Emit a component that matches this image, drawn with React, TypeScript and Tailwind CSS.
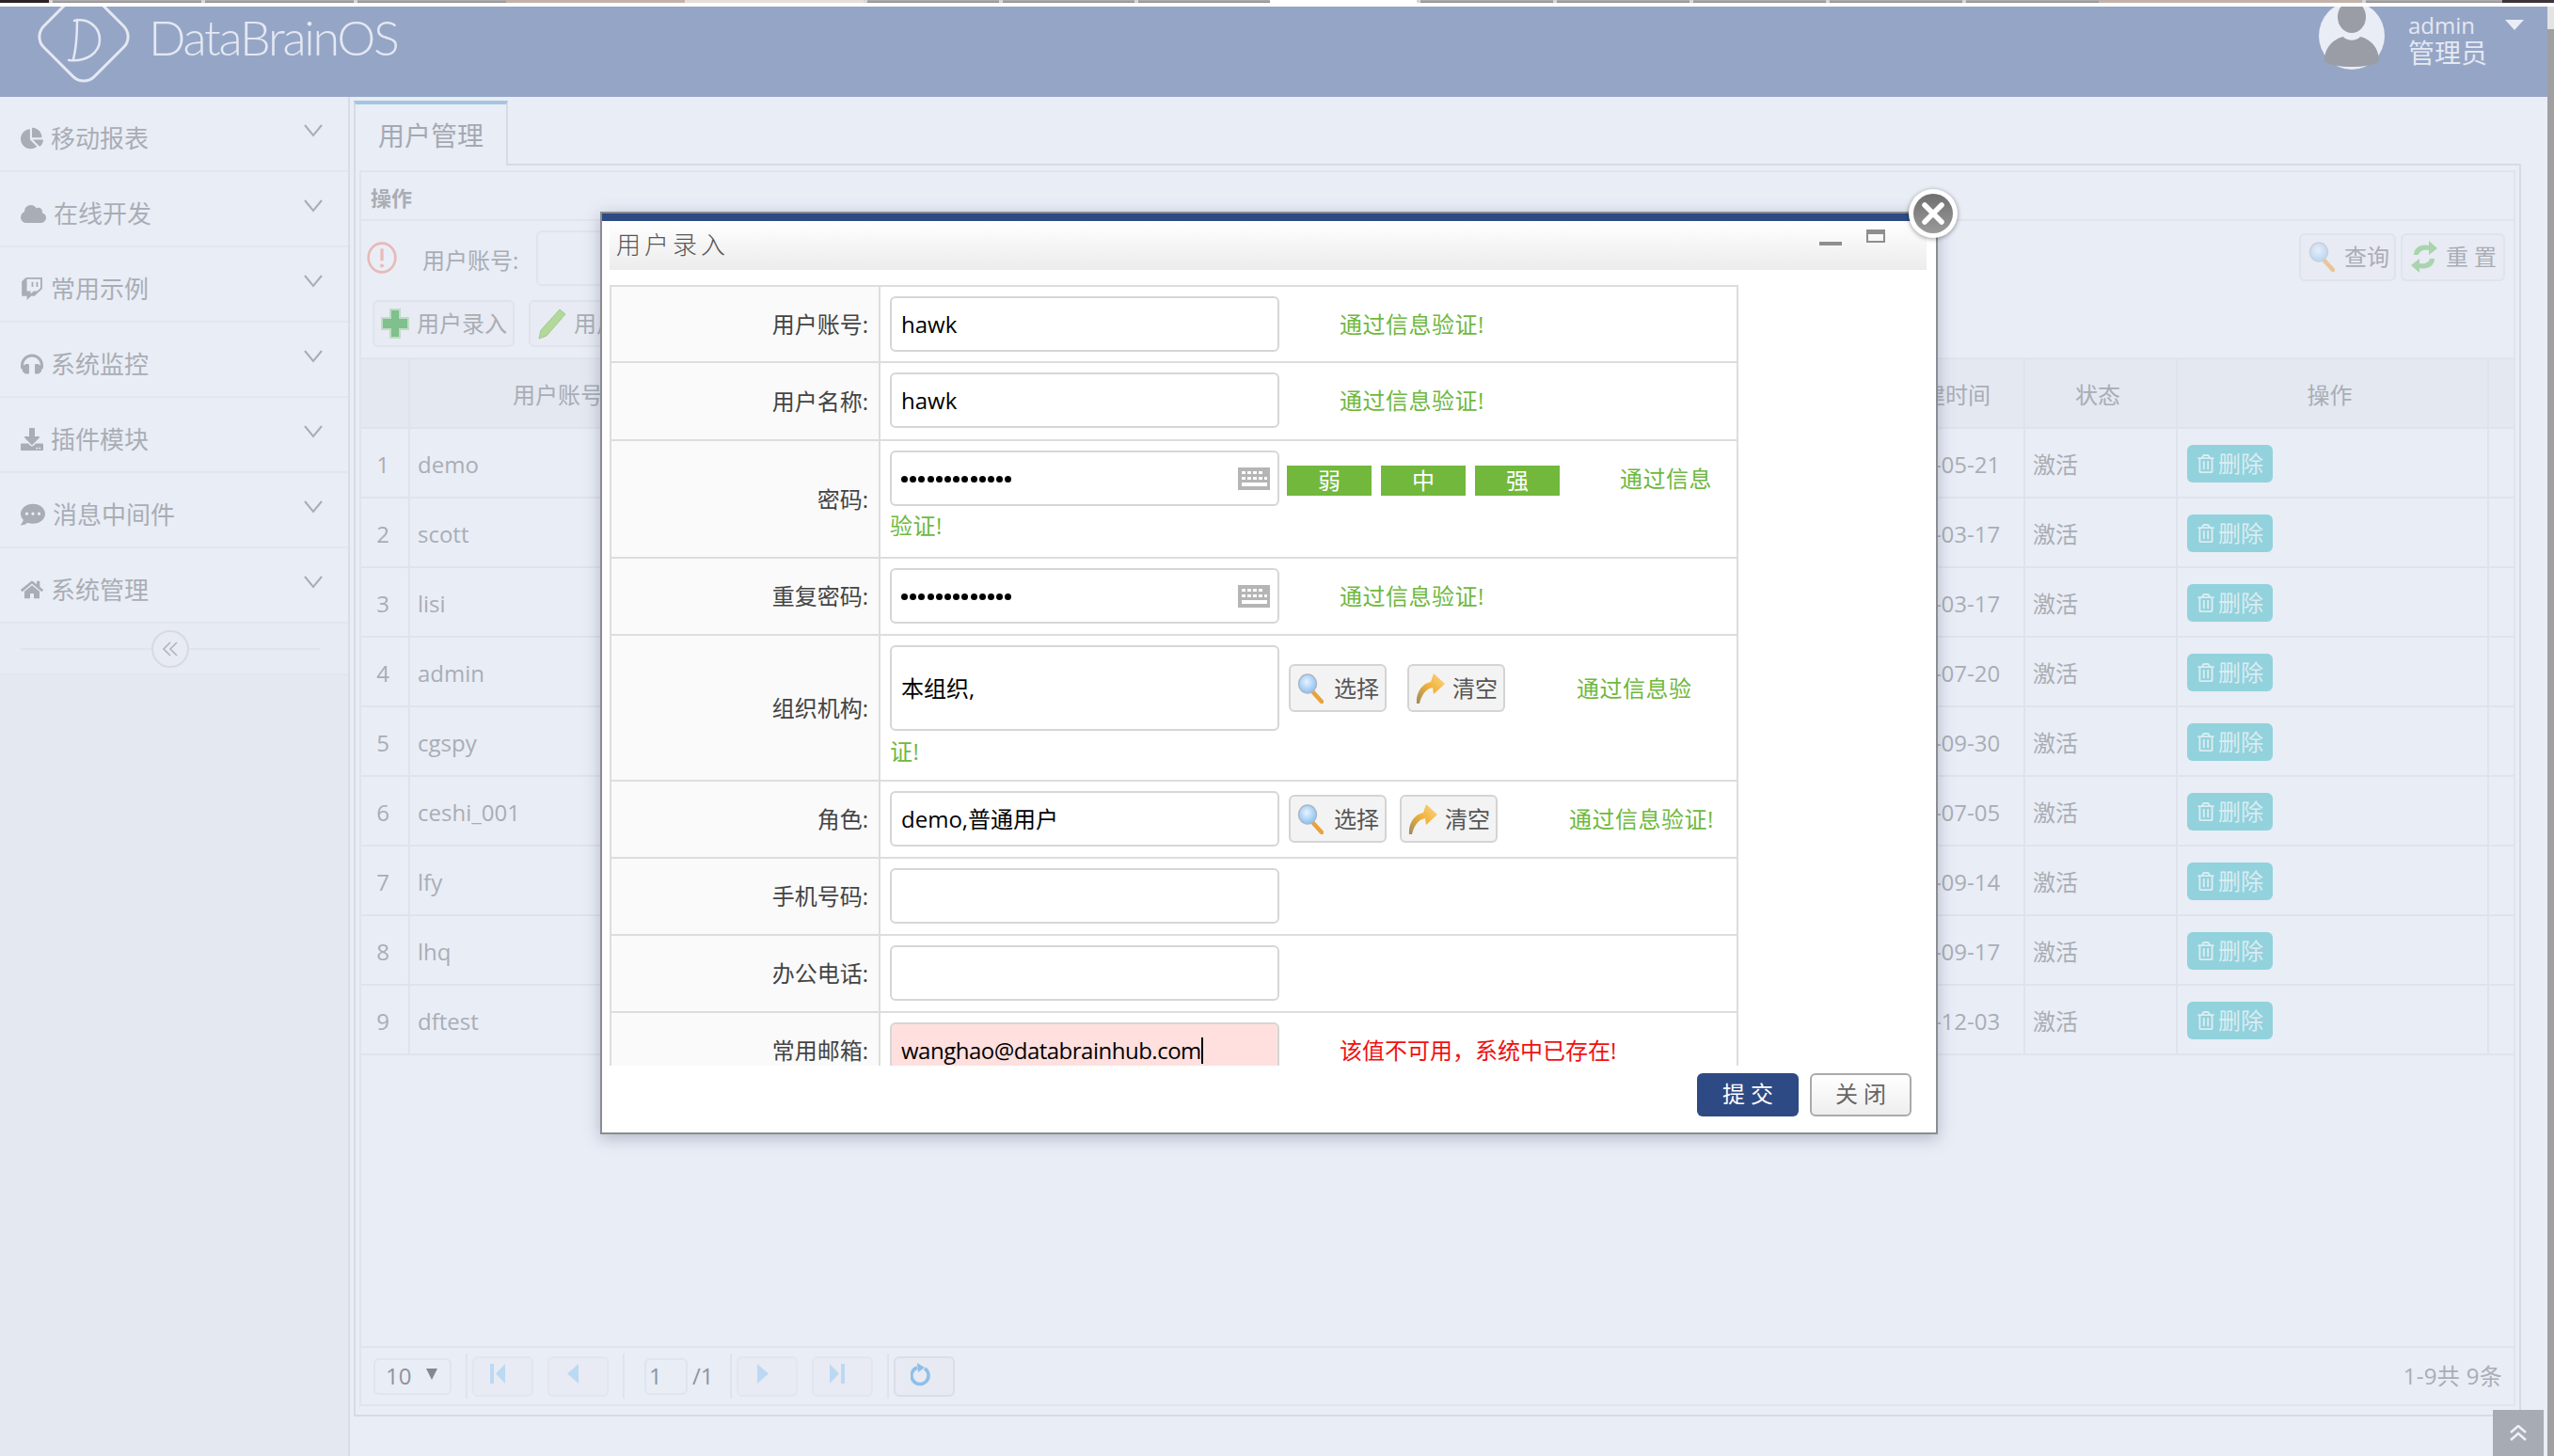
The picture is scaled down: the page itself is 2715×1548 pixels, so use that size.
import React from "react";
import { FaChartPie, FaCloud, FaTwitch, FaHeadphones, FaDownload, FaCommentDots, FaHome, FaRegTrashAlt } from "react-icons/fa";

const SANS = "font-['Open_Sans','Noto_Sans_CJK_SC',sans-serif]";

const Chevron = () => (
  <svg width="20" height="14" viewBox="0 0 20 14" className="shrink-0">
    <polyline points="1,1 10,12 19,1" fill="none" stroke="#a9adb5" strokeWidth="2" />
  </svg>
);

const Magnifier = ({ dim = false, id }: { dim?: boolean; id: string }) => (
  <svg width="28" height="32" viewBox="0 0 28 32" className={dim ? "opacity-50 shrink-0" : "shrink-0"}>
    <defs>
      <radialGradient id={id} cx="0.45" cy="0.4" r="0.7">
        <stop offset="0" stopColor="#e6f3ff" />
        <stop offset="1" stopColor="#7db8ee" />
      </radialGradient>
    </defs>
    <line x1="16" y1="19" x2="26" y2="30" stroke="#e8a23c" strokeWidth="4.5" strokeLinecap="round" />
    <ellipse cx="11" cy="11" rx="9.5" ry="10" fill={`url(#${id})`} stroke="#aeb6c2" strokeWidth="1.5" />
  </svg>
);

const ClearArrow = ({ id }: { id: string }) => (
  <svg width="32" height="34" viewBox="0 0 32 34" className="shrink-0">
    <defs>
      <linearGradient id={id} x1="0" y1="1" x2="1" y2="0">
        <stop offset="0" stopColor="#9c8a60" />
        <stop offset="0.5" stopColor="#f2b13a" />
        <stop offset="1" stopColor="#f8d98a" />
      </linearGradient>
    </defs>
    <path d="M1 33 C0 22 6 12 16 10 L19 1 L31 12 L19 23 L18 16 C11 17 6 24 4 33 Z" fill={`url(#${id})`} />
  </svg>
);

const Keyboard = () => (
  <svg width="34" height="24" viewBox="0 0 34 24" className="shrink-0">
    <rect width="34" height="24" fill="#b5b5b5" />
    <g fill="#fff">
      <rect x="4" y="4" width="4" height="3" /><rect x="10" y="4" width="4" height="3" /><rect x="16" y="4" width="4" height="3" /><rect x="22" y="4" width="4" height="3" />
      <rect x="4" y="10" width="4" height="3" /><rect x="10" y="10" width="4" height="3" /><rect x="16" y="10" width="4" height="3" /><rect x="22" y="10" width="4" height="3" /><rect x="28" y="10" width="3" height="3" />
      <rect x="4" y="16" width="27" height="4" />
    </g>
  </svg>
);

const menu = [
  { icon: <FaChartPie size={24} />, label: "移动报表" },
  { icon: <FaCloud size={27} />, label: "在线开发" },
  { icon: <FaTwitch size={24} />, label: "常用示例" },
  { icon: <FaHeadphones size={24} />, label: "系统监控" },
  { icon: <FaDownload size={24} />, label: "插件模块" },
  { icon: <FaCommentDots size={26} />, label: "消息中间件" },
  { icon: <FaHome size={24} />, label: "系统管理" },
];

const rows = [
  ["demo", "2018-05-21"],
  ["scott", "2018-03-17"],
  ["lisi", "2018-03-17"],
  ["admin", "2018-07-20"],
  ["cgspy", "2018-09-30"],
  ["ceshi_001", "2018-07-05"],
  ["lfy", "2018-09-14"],
  ["lhq", "2018-09-17"],
  ["dftest", "2018-12-03"],
];

const Input = ({ children, pink = false, h = "h-[59px]" }: { children?: React.ReactNode; pink?: boolean; h?: string }) => (
  <div className={`${h} w-[414px] shrink-0 flex items-center justify-between pl-[10px] pr-[8px] rounded-[6px] border-2 border-[#d6d6d6] text-[24px] text-black ${pink ? "bg-[#ffe0de]" : "bg-white"}`}>
    {children}
  </div>
);

const Dots = () => (
  <div className="flex gap-[2.2px] mt-[2px]">
    {Array.from({ length: 13 }).map((_, i) => (
      <span key={i} className="w-[7px] h-[7px] rounded-full bg-black" />
    ))}
  </div>
);

const FormRow = ({ label, h, children }: { label: string; h: string; children?: React.ReactNode }) => (
  <div className={`flex ${h} shrink-0 border-b-2 border-[#dddddd]`}>
    <div className="w-[286px] shrink-0 bg-[#fafafa] border-r-2 border-[#dddddd] flex items-center justify-end pr-[11px] text-[24px] text-[#444]">{label}</div>
    <div className="flex-1 pl-[10px] pt-[10px] bg-white">{children}</div>
  </div>
);

const Ok = ({ className, children }: { className: string; children: React.ReactNode }) => (
  <span className={`text-[24px] leading-none tracking-[0.5px] text-[#6fb83e] whitespace-nowrap ${className}`}>{children}</span>
);

const PickBtn = ({ id, kind, label, className }: { id: string; kind: "search" | "clear"; label: string; className: string }) => (
  <div className={`h-[51px] w-[104px] shrink-0 flex items-center justify-between pl-[7px] pr-[6px] rounded-[6px] border-2 border-[#d4d4d4] bg-[#f3f3f3] text-[24px] text-[#555] ${className}`}>
    {kind === "search" ? <Magnifier id={id} /> : <ClearArrow id={id} />}
    <span className="whitespace-nowrap">{label}</span>
  </div>
);

const PagerBtn = ({ className, pl, active = false, children }: { className: string; pl: string; active?: boolean; children: React.ReactNode }) => (
  <div className={`h-[43px] w-[65px] shrink-0 flex items-start pt-[6px] ${pl} rounded-[6px] border-2 ${active ? "border-[#dadee8] bg-[#e7eaf2]" : "border-[#e2e6ef] bg-[#e8ebf3]"} ${className}`}>
    {children}
  </div>
);

const Sep = ({ className }: { className: string }) => <div className={`w-[2px] h-[48px] bg-[#dfe3ec] shrink-0 ${className}`} />;

const TopTabs = ({ n, w = "w-[145px]" }: { n: number; w?: string }) => (
  <>
    {Array.from({ length: n }).map((_, i) => (
      <div key={i} className={`${w} shrink-0 h-full bg-gradient-to-b from-[#b4b2b2] to-[#8e8c8c] border-l-[4px] border-[#d8d6d6]`} />
    ))}
  </>
);

export default function App() {
  return (
    <div className={`relative w-[2715px] h-[1548px] overflow-hidden flex flex-col bg-white ${SANS}`}>
      {/* browser tab strip */}
      <div className="h-[3px] flex bg-white shrink-0 overflow-hidden">
        <div className="w-[52px] shrink-0 bg-[#2a2326]" />
        <TopTabs n={3} w="w-[162px]" />
        <div className="w-[190px] shrink-0 bg-[#c4b2aa]" />
        <div className="w-[190px] shrink-0 bg-[#e6ded8]" />
        <TopTabs n={3} w="w-[144px]" />
        <div className="w-[156px] shrink-0 bg-white" />
        <TopTabs n={5} />
        <div className="w-[280px] shrink-0 bg-[#c4b2aa]" />
        <TopTabs n={1} w="w-[149px]" />
        <div className="flex-1 bg-[#3c3439]" />
      </div>
      <div className="h-[4px] bg-white shrink-0" />

      <div className="flex-1 flex min-h-0">
        <div className="flex-1 flex flex-col min-w-0 bg-[#e9edf6]">
          {/* header */}
          <header className="h-[96px] shrink-0 bg-[#95a5c6] flex items-start overflow-hidden pr-[25px]">
            <svg width="100" height="96" viewBox="0 0 100 96" className="ml-[39px] mt-0 shrink-0">
              <rect x="12" y="-6" width="76" height="76" rx="16" transform="rotate(45 50 32)" fill="none" stroke="#e4e8f2" strokeWidth="3" />
              <path d="M43 14 C43 28 42 44 39 56 M34 57 C52 59 67 50 67 35 C67 21 54 12 40 15" fill="none" stroke="#e4e8f2" strokeWidth="2.5" strokeLinecap="round" />
            </svg>
            <span className="ml-[19px] mt-[1px] text-[52px] leading-[62px] tracking-[-2.3px] text-[#e4e8f2] font-['Lato',sans-serif] font-light whitespace-nowrap">DataBrainOS</span>
            <svg width="72" height="68" viewBox="0 0 72 68" className="ml-auto shrink-0">
              <ellipse cx="36" cy="31" rx="35" ry="36" fill="#e9edf6" />
              <ellipse cx="36" cy="11" rx="15" ry="17" fill="#9a9da5" />
              <path d="M7 58 C7 42 18 34 27 32 C31 37 41 37 45 32 C54 34 65 42 65 58 C56 66 16 66 7 58 Z" fill="#9a9da5" />
            </svg>
            <div className="ml-[24px] w-[103px] flex flex-col text-[#e4e8f2] whitespace-nowrap">
              <span className="text-[24px] leading-[24px] mt-[8px]">admin</span>
              <span className="text-[28px] leading-[30px] mt-[2px]">管理员</span>
            </div>
            <svg width="20" height="11" viewBox="0 0 20 11" className="mt-[14px] shrink-0">
              <polygon points="0,0 20,0 10,11" fill="#e9edf6" />
            </svg>
          </header>

          <div className="flex-1 flex min-h-0">
            {/* sidebar */}
            <aside className="w-[372px] shrink-0 bg-[#e4e8f1] border-r-2 border-[#d8dce6] flex flex-col text-[#a9adb5]">
              {menu.map((m) => (
                <div key={m.label} className="h-[80px] shrink-0 bg-[#e9edf6] border-b-2 border-[#e2e6ef] flex items-center pl-[22px] pr-[27px]">
                  <span className="mt-[10px] flex items-center gap-[8px] text-[26px] leading-none whitespace-nowrap">
                    {m.icon}
                    <span>{m.label}</span>
                  </span>
                  <span className="ml-auto mb-[6px]"><Chevron /></span>
                </div>
              ))}
              <div className="h-[55px] shrink-0 border-b-2 border-[#e2e6ef] bg-[#e7ebf3] flex items-center pl-[22px] pr-[30px]">
                <div className="flex-1 h-[2px] bg-[#e0e4ed]" />
                <div className="w-[40px] h-[40px] rounded-full border-2 border-[#d6dae4] flex items-center justify-center bg-[#e8ebf3] shrink-0">
                  <svg width="16" height="16" viewBox="0 0 16 16">
                    <polyline points="8,1 1,8 8,15" fill="none" stroke="#b0b4bc" strokeWidth="1.6" />
                    <polyline points="15,1 8,8 15,15" fill="none" stroke="#b0b4bc" strokeWidth="1.6" />
                  </svg>
                </div>
                <div className="flex-1 h-[2px] bg-[#e0e4ed]" />
              </div>
            </aside>

            {/* main */}
            <main className="flex-1 min-w-0 pl-[4px] pr-[28px] pt-[4px] flex flex-col text-[#a9adb5]">
              <div className="h-[69px] shrink-0 flex border-b-2 border-[#d5dbe7]">
                <div className="w-[164px] h-[69px] border-t-4 border-t-[#a5c5e0] border-x-2 border-x-[#d5dbe7] bg-[#e9edf6] flex items-center justify-center text-[28px] text-[#a5a9b1]">用户管理</div>
              </div>
              <div className="h-[1330px] shrink-0 border-x-2 border-b-2 border-[#d5dbe7] pt-[5px] px-[4px] pb-[9px] flex">
                <div className="flex-1 min-w-0 border-2 border-[#e0e4ed] flex flex-col">
                  <div className="h-[52px] shrink-0 border-b-2 border-[#e0e4ed] flex items-center pl-[10px] pt-[4px] text-[22px] font-bold text-[#a9adb5]">操作</div>
                  {/* toolbar */}
                  <div className="h-[147px] shrink-0 border-b-2 border-[#e0e4ed] flex flex-col">
                    <div className="h-[84px] shrink-0 flex items-center pl-[6px] pr-[9px]">
                      <svg width="32" height="34" viewBox="0 0 30 32" className="shrink-0 mb-[6px]">
                        <ellipse cx="15" cy="16" rx="13.5" ry="14.5" fill="none" stroke="#e8b9b8" strokeWidth="2.5" />
                        <line x1="15" y1="7" x2="15" y2="19" stroke="#e8b9b8" strokeWidth="3" />
                        <circle cx="15" cy="24" r="1.8" fill="#e8b9b8" />
                      </svg>
                      <span className="ml-[27px] text-[24px] whitespace-nowrap">用户账号:</span>
                      <div className="ml-[19px] w-[260px] h-[59px] rounded-[6px] border-2 border-[#e0e4ed] mb-[6px]" />
                      <div className="ml-auto flex gap-[5px] mb-[8px]">
                        <div className="w-[103px] h-[51px] rounded-[6px] border-2 border-[#dfe3ec] flex items-center justify-between pl-[8px] pr-[5px] bg-[#e8ebf3] text-[24px]">
                          <Magnifier dim id="q1" />
                          <span className="whitespace-nowrap">查询</span>
                        </div>
                        <div className="w-[111px] h-[51px] rounded-[6px] border-2 border-[#dfe3ec] flex items-center justify-between pl-[8px] pr-[1px] bg-[#e8ebf3] text-[24px]">
                          <svg width="30" height="36" viewBox="0 0 30 36" className="shrink-0">
                            <path d="M4 16 C4 8 12 4 20 6 L20 1 L29 9 L20 16 L20 11 C14 10 10 12 9 16 Z M26 20 C26 28 18 32 10 30 L10 35 L1 27 L10 20 L10 25 C16 26 20 24 21 20 Z" fill="#a9d4ad" />
                          </svg>
                          <span className="whitespace-nowrap tracking-[6px]">重置</span>
                        </div>
                      </div>
                    </div>
                    <div className="flex pl-[12px] gap-[15px]">
                      <div className="w-[151px] h-[50px] rounded-[6px] border-2 border-[#dfe3ec] bg-[#e8ebf3] flex items-center justify-between px-[6px] text-[24px]">
                        <svg width="32" height="34" viewBox="0 0 32 34" className="shrink-0">
                          <path d="M11 2 H21 V11 H30 V23 H21 V32 H11 V23 H2 V11 H11 Z" fill="#7fc08c" stroke="#bfdcc8" strokeWidth="2" />
                        </svg>
                        <span className="whitespace-nowrap">用户录入</span>
                      </div>
                      <div className="w-[151px] h-[50px] rounded-[6px] border-2 border-[#dfe3ec] bg-[#e8ebf3] flex items-center pl-[8px] gap-[8px] text-[24px]">
                        <svg width="30" height="34" viewBox="0 0 30 34" className="shrink-0">
                          <path d="M23 2 L29 7 L9 30 L1 33 L3 24 Z" fill="#b2d99a" stroke="#a1c98e" strokeWidth="1" />
                        </svg>
                        <span className="whitespace-nowrap">用户修改</span>
                      </div>
                    </div>
                  </div>

                  {/* table */}
                  <div className="h-[74px] shrink-0 flex bg-[#e4e8f1] border-b-2 border-[#dfe3ec] text-[24px]">
                    <div className="w-[52px] shrink-0 border-r-2 border-[#dfe3ec]" />
                    <div className="w-[316px] shrink-0 border-r-2 border-[#dfe3ec] flex items-center justify-center pt-[3px]">用户账号</div>
                    <div className="flex-1 border-r-2 border-[#dfe3ec]" />
                    <div className="w-[168px] shrink-0 border-r-2 border-[#dfe3ec] flex items-center justify-center pt-[3px]">创建时间</div>
                    <div className="w-[162px] shrink-0 border-r-2 border-[#dfe3ec] flex items-center justify-center pt-[3px] pr-[6px]">状态</div>
                    <div className="w-[331px] shrink-0 border-r-2 border-[#dfe3ec] flex items-center justify-center pt-[3px] pr-[6px]">操作</div>
                    <div className="w-[26px] shrink-0" />
                  </div>
                  {rows.map((r, i) => (
                    <div key={r[0]} className="h-[74px] shrink-0 flex border-b-2 border-[#dfe3ec] text-[24px]">
                      <div className="w-[52px] shrink-0 border-r-2 border-[#dfe3ec] flex items-center justify-center pt-[3px] pr-[4px]">{i + 1}</div>
                      <div className="w-[316px] shrink-0 border-r-2 border-[#dfe3ec] flex items-center pl-[8px] pt-[3px]">{r[0]}</div>
                      <div className="flex-1 border-r-2 border-[#dfe3ec]" />
                      <div className="w-[168px] shrink-0 border-r-2 border-[#dfe3ec] flex items-center pl-[16px] pt-[3px]">{r[1]}</div>
                      <div className="w-[162px] shrink-0 border-r-2 border-[#dfe3ec] flex items-center pl-[8px] pt-[3px]">激活</div>
                      <div className="w-[331px] shrink-0 border-r-2 border-[#dfe3ec] flex items-center pl-[10px] pt-[1px]">
                        <div className="w-[91px] h-[40px] rounded-[6px] bg-[#92d2dc] text-[#dcecf2] flex items-center justify-center gap-[3px] text-[24px] whitespace-nowrap">
                          <FaRegTrashAlt size={20} />
                          <span>删除</span>
                        </div>
                      </div>
                      <div className="w-[26px] shrink-0" />
                    </div>
                  ))}

                  <div className="flex-1" />

                  {/* pager */}
                  <div className="h-[62px] shrink-0 border-t-2 border-[#e0e4ed] flex items-center pl-[13px] pr-[12px] text-[24px]">
                    <div className="w-[83px] h-[39px] rounded-[6px] border-2 border-[#e0e4ed] flex items-center pl-[11px] shrink-0">
                      <span className="text-[#8f939b]">10</span>
                      <svg width="12" height="12" viewBox="0 0 12 12" className="ml-[16px] mb-[4px]"><polygon points="0,0 12,0 6,12" fill="#85888f" /></svg>
                    </div>
                    <Sep className="ml-[15px]" />
                    <PagerBtn pl="pl-[17px]" className="ml-[5px]">
                      <svg width="17" height="21" viewBox="0 0 17 21"><rect x="0" y="0" width="4" height="21" fill="#bcd9f3" /><polygon points="6,10.5 16,0 16,21" fill="#bcd9f3" /></svg>
                    </PagerBtn>
                    <PagerBtn pl="pl-[19px]" className="ml-[15px]">
                      <svg width="13" height="21" viewBox="0 0 13 21"><polygon points="0,10.5 12,0 12,21" fill="#bcd9f3" /></svg>
                    </PagerBtn>
                    <Sep className="ml-[15px]" />
                    <div className="ml-[21px] w-[46px] h-[39px] rounded-[6px] border-2 border-[#e0e4ed] flex items-center pl-[3px] text-[#8f939b] shrink-0">1</div>
                    <span className="ml-[5px] text-[#8f939b] whitespace-nowrap">/1</span>
                    <Sep className="ml-[17px]" />
                    <PagerBtn pl="pl-[20px]" className="ml-[5px]">
                      <svg width="13" height="21" viewBox="0 0 13 21"><polygon points="12,10.5 0,0 0,21" fill="#bcd9f3" /></svg>
                    </PagerBtn>
                    <PagerBtn pl="pl-[17px]" className="ml-[15px]">
                      <svg width="17" height="21" viewBox="0 0 17 21"><polygon points="10,10.5 0,0 0,21" fill="#bcd9f3" /><rect x="12" y="0" width="4" height="21" fill="#bcd9f3" /></svg>
                    </PagerBtn>
                    <Sep className="ml-[15px]" />
                    <PagerBtn active pl="pl-[16px]" className="ml-[5px]">
                      <svg width="22" height="26" viewBox="0 0 22 26" className="mt-[-2px]">
                        <path d="M7 6 A9 9 0 1 0 15 7" fill="none" stroke="#8ebfe8" strokeWidth="3.5" />
                        <polygon points="7,1 15,6 8,11" fill="#8ebfe8" />
                      </svg>
                    </PagerBtn>
                    <span className="ml-auto text-[#a9adb5] tracking-[0.3px] whitespace-nowrap">1-9共 9条</span>
                  </div>
                </div>
              </div>
            </main>
          </div>
        </div>

        {/* scrollbar */}
        <div className="w-[7px] shrink-0 flex flex-col">
          <div className="h-[24px] bg-[#e4e4e4]" />
          <div className="flex-1 bg-[#a0a0a0]" />
        </div>
      </div>

      {/* back to top */}
      <div className="absolute left-[2650px] top-[1499px] w-[54px] h-[49px] bg-[#a7abb4] flex items-center justify-center">
        <svg width="18" height="18" viewBox="0 0 18 18">
          <polyline points="1,8 9,1 17,8" fill="none" stroke="#eef0f5" strokeWidth="2.5" />
          <polyline points="1,16 9,9 17,16" fill="none" stroke="#eef0f5" strokeWidth="2.5" />
        </svg>
      </div>

      {/* modal */}
      <div className="absolute left-[638px] top-[225px] w-[1422px] h-[981px] bg-white border-2 border-[#8a8c90] shadow-[0_4px_16px_rgba(70,80,110,0.35)] flex flex-col">
        <div className="h-[8px] shrink-0 bg-[#2d4a84]" />
        <div className="h-[52px] shrink-0 ml-[8px] mr-[10px] bg-gradient-to-b from-white to-[#ececec] flex items-center pl-[7px] pr-[44px]">
          <span className="text-[26px] tracking-[4px] text-[#555] font-['Liberation_Serif','Noto_Sans_CJK_SC',serif] font-light whitespace-nowrap">用户录入</span>
          <div className="ml-auto w-[24px] h-[4px] bg-[#8e8e8e] mt-[-4px]" />
          <div className="ml-[26px] w-[20px] h-[14px] border-2 border-t-[5px] border-[#8e8e8e] mt-[-20px]" />
        </div>

        <div className="h-[846px] shrink-0 ml-[8px] overflow-hidden pt-[16px]">
          <div className="w-[1200px] border-2 border-[#dddddd] flex flex-col">
            <FormRow label="用户账号:" h="h-[81px]">
              <div className="flex items-center">
                <Input>hawk</Input>
                <Ok className="ml-[64px]">通过信息验证!</Ok>
              </div>
            </FormRow>
            <FormRow label="用户名称:" h="h-[83px]">
              <div className="flex items-center">
                <Input>hawk</Input>
                <Ok className="ml-[64px]">通过信息验证!</Ok>
              </div>
            </FormRow>
            <FormRow label="密码:" h="h-[125px]">
              <div className="flex items-center">
                <Input><Dots /><Keyboard /></Input>
                <div className="ml-[8px] flex gap-[10px] mt-[4px]">
                  {["弱", "中", "强"].map((t) => (
                    <div key={t} className="w-[90px] h-[32px] bg-[#72b83c] text-white text-[24px] leading-[32px] text-center">{t}</div>
                  ))}
                </div>
                <Ok className="ml-[64px]">通过信息</Ok>
              </div>
              <div className="mt-[9px]"><Ok className="">验证!</Ok></div>
            </FormRow>
            <FormRow label="重复密码:" h="h-[82px]">
              <div className="flex items-center">
                <Input><Dots /><Keyboard /></Input>
                <Ok className="ml-[64px]">通过信息验证!</Ok>
              </div>
            </FormRow>
            <FormRow label="组织机构:" h="h-[155px]">
              <div className="flex items-center">
                <Input h="h-[91px]">本组织,</Input>
                <PickBtn id="m1" kind="search" label="选择" className="ml-[10px]" />
                <PickBtn id="c1" kind="clear" label="清空" className="ml-[22px]" />
                <Ok className="ml-[76px]">通过信息验</Ok>
              </div>
              <div className="mt-[10px]"><Ok className="">证!</Ok></div>
            </FormRow>
            <FormRow label="角色:" h="h-[82px]">
              <div className="flex items-center">
                <Input>demo,普通用户</Input>
                <PickBtn id="m2" kind="search" label="选择" className="ml-[10px]" />
                <PickBtn id="c2" kind="clear" label="清空" className="ml-[14px]" />
                <Ok className="ml-[76px]">通过信息验证!</Ok>
              </div>
            </FormRow>
            <FormRow label="手机号码:" h="h-[82px]">
              <Input />
            </FormRow>
            <FormRow label="办公电话:" h="h-[82px]">
              <Input />
            </FormRow>
            <FormRow label="常用邮箱:" h="h-[82px]">
              <div className="flex items-center">
                <Input pink>
                  <span className="border-r-2 border-black leading-[28px] tracking-[-0.5px] whitespace-nowrap">wanghao@databrainhub.com</span>
                </Input>
                <span className="ml-[64px] text-[24px] leading-none text-[#f01010] whitespace-nowrap">{"该值不可用\uFF0C系统中已存在!"}</span>
              </div>
            </FormRow>
          </div>
        </div>

        <div className="flex-1 flex items-start justify-end gap-[12px] pt-[8px] pr-[26px] font-['Liberation_Serif','Noto_Sans_CJK_SC',serif]">
          <div className="w-[108px] h-[46px] rounded-[6px] bg-[#2d4a84] text-white text-[24px] flex items-center justify-center pl-[6px] tracking-[6px]">提交</div>
          <div className="w-[108px] h-[46px] rounded-[6px] border-2 border-[#aaaaaa] bg-gradient-to-b from-white to-[#eeeeee] text-[#666] text-[24px] flex items-center justify-center pl-[6px] tracking-[6px]">关闭</div>
        </div>

        {/* close badge */}
        <div className="absolute left-[1389px] top-[-26px] w-[52px] h-[52px] rounded-full bg-white shadow-[0_1px_5px_rgba(0,0,0,0.4)] flex items-center justify-center">
          <div className="w-[42px] h-[42px] rounded-full bg-gradient-to-b from-[#6f6f6f] to-[#9a9a9a] flex items-center justify-center">
            <svg width="26" height="26" viewBox="0 0 26 26">
              <line x1="4" y1="4" x2="22" y2="22" stroke="#fff" strokeWidth="5.5" strokeLinecap="round" />
              <line x1="22" y1="4" x2="4" y2="22" stroke="#fff" strokeWidth="5.5" strokeLinecap="round" />
            </svg>
          </div>
        </div>
      </div>
    </div>
  );
}
